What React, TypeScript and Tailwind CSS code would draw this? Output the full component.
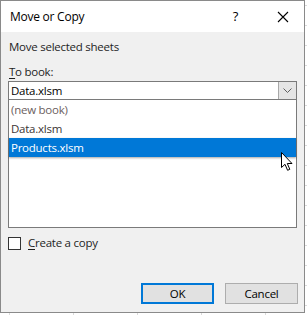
import { useState } from "react";

const books = ["(new book)", "Data.xlsm", "Products.xlsm"];

export default function App() {
  const [selected, setSelected] = useState(2);
  const [copy, setCopy] = useState(false);

  return (
    <div
      className="relative w-[307px] h-[315px] overflow-hidden bg-white bg-[linear-gradient(to_right,#dadada_1px,transparent_1px),linear-gradient(to_bottom,#dadada_1px,transparent_1px)] bg-[size:64px_20px] bg-[position:9px_5px] text-[11.5px] tracking-[-0.25px] text-[#1e1e1e]"
      style={{ fontFamily: '"Open Sans", "Noto Sans", sans-serif' }}
    >
      <div className="flex flex-col w-[305px] h-[313px] border border-[#8a8a8a] bg-[#f0f0f0]">
        {/* title bar */}
        <div className="flex items-center h-[31px] bg-white pl-[9px]">
          <span className="text-[12px] text-black">Move or Copy</span>
          <span className="ml-auto mr-[39px] text-[13px] text-black">?</span>
          <svg width="12" height="12" viewBox="0 0 12 12" className="mr-[15px]">
            <path d="M1 1 L11 11 M11 1 L1 11" stroke="#000" strokeWidth="1.1" />
          </svg>
        </div>

        <div className="flex flex-col px-[7px]">
          <div className="mt-[7px] ml-[1px] h-[16px] leading-[16px]">Move selected sheets</div>
          <div className="mt-[9px] ml-[1px] h-[16px] leading-[16px]">
            <span className="underline underline-offset-2">T</span>o book:
          </div>

          {/* combo box */}
          <div className="flex items-center mt-[1px] h-[19px] border border-[#7a7a7a] bg-white">
            <span className="pl-[2px] text-black">{books[1]}</span>
            <div className="ml-auto flex items-center justify-center w-[18px] h-[17px] bg-[#e5e5e5] border-l border-[#a8a8a8]">
              <svg width="9" height="5" viewBox="0 0 9 5">
                <path d="M0.5 0.5 L4.5 4.5 L8.5 0.5" fill="none" stroke="#606060" strokeWidth="1" />
              </svg>
            </div>
          </div>

          {/* dropdown list */}
          <div className="relative flex flex-col h-[128px] border border-[#7a7a7a] border-t-0 bg-white">
            {books.map((b, i) => (
              <div
                key={b}
                onClick={() => setSelected(i)}
                className={`h-[19px] leading-[19px] pl-[2px] ${
                  selected === i
                    ? "bg-[#0078d7] text-white shadow-[0_1px_2px_rgba(0,0,0,0.35)]"
                    : i === 0
                    ? "text-[#6b5e5e]"
                    : "text-[#3c3434]"
                }`}
              >
                {b}
              </div>
            ))}
            <svg
              width="13"
              height="20"
              viewBox="0 0 13 20"
              className="absolute left-[272px] top-[52px]"
            >
              <path
                d="M0.5 0.5 L0.5 15.5 L4 12.3 L6.6 18.3 L8.8 17.3 L6.3 11.5 L11 11.5 Z"
                fill="#fff"
                stroke="#000"
                strokeWidth="1"
                strokeLinejoin="miter"
              />
            </svg>
          </div>

          {/* checkbox */}
          <label className="flex items-center mt-[8px] h-[14px]" onClick={() => setCopy(!copy)}>
            <span className="w-[13px] h-[13px] border border-[#333] bg-white flex items-center justify-center">
              {copy && (
                <svg width="9" height="9" viewBox="0 0 9 9">
                  <path d="M1 4.5 L3.5 7 L8 1.5" fill="none" stroke="#000" strokeWidth="1.3" />
                </svg>
              )}
            </span>
            <span className="ml-[7px]">
              <span className="underline underline-offset-2">C</span>reate a copy
            </span>
          </label>
        </div>

        {/* buttons */}
        <div className="flex justify-end gap-[11px] mt-auto mb-[8px] pr-[6px]">
          <button className="w-[73px] h-[21px] border-2 border-[#0078d7] bg-[#e1e1e1] text-black leading-none">
            OK
          </button>
          <button className="w-[73px] h-[21px] border border-[#adadad] bg-[#e1e1e1] text-black leading-none">
            Cancel
          </button>
        </div>
      </div>
    </div>
  );
}
